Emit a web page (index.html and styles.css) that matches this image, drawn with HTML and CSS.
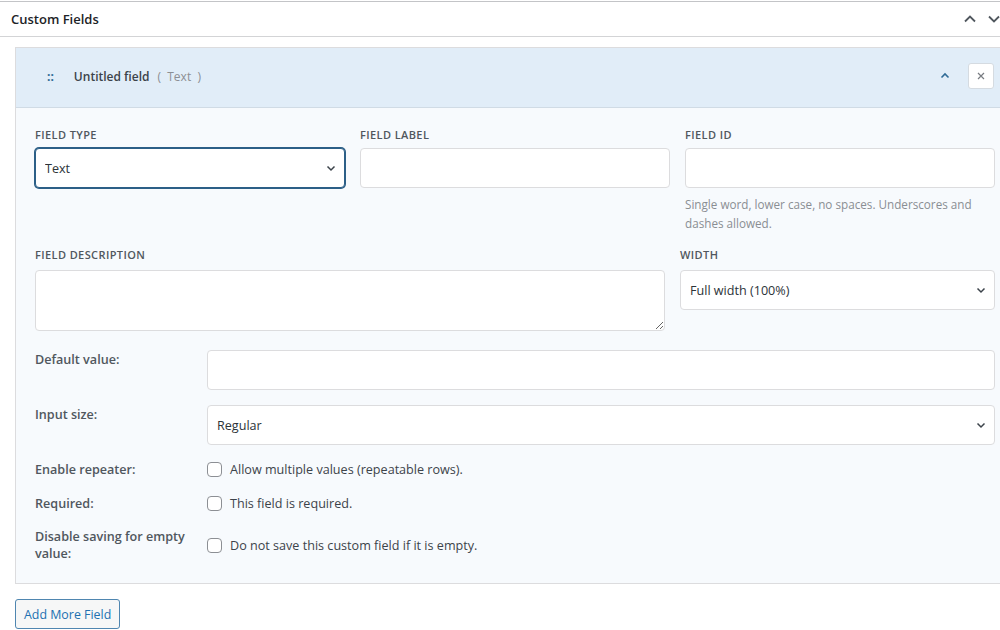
FILE: index.html
```html
<!DOCTYPE html>
<html lang="en">
<head>
<meta charset="UTF-8" />
<meta name="viewport" content="width=device-width, initial-scale=1" />
<title>Custom Fields</title>
<link rel="stylesheet" href="styles.css">
</head>
<body>

<div class="postbox">
  <!-- Box header -->
  <div class="postbox-header">
    <h2>Custom Fields</h2>
    <div class="order-btns">
      <button class="order-btn" aria-label="Move up">
        <svg width="14" height="14" viewBox="0 0 14 14"><path d="M2 9.5 7 4.5l5 5" fill="none" stroke="#50575e" stroke-width="1.8"/></svg>
      </button>
      <button class="order-btn" aria-label="Move down">
        <svg width="14" height="14" viewBox="0 0 14 14"><path d="M2 4.5 7 9.5l5-5" fill="none" stroke="#50575e" stroke-width="1.8"/></svg>
      </button>
    </div>
  </div>

  <div class="inside">
    <!-- Field panel -->
    <div class="field-panel">
      <div class="field-head">
        <span class="drag">::</span>
        <span class="field-name">Untitled field</span>
        <span class="field-type">(&nbsp;&nbsp;Text&nbsp;&nbsp;)</span>
        <span class="head-spacer"></span>
        <button class="toggle-btn" aria-label="Collapse">
          <svg width="12" height="12" viewBox="0 0 12 12"><path d="M2.5 7.5 6 4l3.5 3.5" fill="none" stroke="#2f6b96" stroke-width="1.6"/></svg>
        </button>
        <button class="remove-btn" aria-label="Remove">
          <svg width="10" height="10" viewBox="0 0 10 10"><path d="M2 2l6 6M8 2 2 8" fill="none" stroke="#787c82" stroke-width="1.2"/></svg>
        </button>
      </div>

      <div class="field-body">
        <div class="grid-3">
          <div class="col">
            <label class="cap-label" for="ftype">Field Type</label>
            <div class="select-wrap">
              <select id="ftype" class="control focused"><option>Text</option></select>
              <svg class="chev" width="12" height="12" viewBox="0 0 12 12"><path d="M2.5 4.5 6 8l3.5-3.5" fill="none" stroke="#3c434a" stroke-width="1.5"/></svg>
            </div>
          </div>
          <div class="col">
            <label class="cap-label" for="flabel">Field Label</label>
            <input id="flabel" class="control" type="text" />
          </div>
          <div class="col">
            <label class="cap-label" for="fid">Field ID</label>
            <input id="fid" class="control" type="text" />
            <p class="help">Single word, lower case, no spaces. Underscores and dashes allowed.</p>
          </div>
        </div>

        <div class="grid-2">
          <div class="col">
            <label class="cap-label" for="fdesc">Field Description</label>
            <textarea id="fdesc" class="control area"></textarea>
          </div>
          <div class="col">
            <label class="cap-label" for="fwidth">Width</label>
            <div class="select-wrap">
              <select id="fwidth" class="control"><option>Full width (100%)</option></select>
              <svg class="chev" width="12" height="12" viewBox="0 0 12 12"><path d="M2.5 4.5 6 8l3.5-3.5" fill="none" stroke="#3c434a" stroke-width="1.5"/></svg>
            </div>
          </div>
        </div>

        <div class="opts">
          <label class="opt-label top" for="fdefault">Default value:</label>
          <input id="fdefault" class="control" type="text" />

          <label class="opt-label top" for="fsize">Input size:</label>
          <div class="select-wrap">
            <select id="fsize" class="control"><option>Regular</option></select>
            <svg class="chev" width="12" height="12" viewBox="0 0 12 12"><path d="M2.5 4.5 6 8l3.5-3.5" fill="none" stroke="#3c434a" stroke-width="1.5"/></svg>
          </div>

          <span class="opt-label">Enable repeater:</span>
          <label class="check"><input type="checkbox" /> Allow multiple values (repeatable rows).</label>

          <span class="opt-label">Required:</span>
          <label class="check"><input type="checkbox" /> This field is required.</label>

          <span class="opt-label">Disable saving for empty value:</span>
          <label class="check"><input type="checkbox" /> Do not save this custom field if it is empty.</label>
        </div>
      </div>
    </div>

    <button class="add-btn">Add More Field</button>
  </div>
</div>

</body>
</html>
```

FILE: styles.css
```css
html, body {
  margin: 0;
  overflow: hidden;
  background: #fff;
}

body {
  font-family: "Open Sans", "Noto Sans", sans-serif;
  font-size: 12.6px;
  color: #3c434a;
}

/* Outer meta box */
.postbox {
  width: 1030px;
  border-top: 1px solid #c3c4c7;
  margin-top: 1px;
  background: #fff;
}

.postbox-header {
  display: flex;
  align-items: center;
  height: 34px;
  border-bottom: 1px solid #d3d4d6;
}

.postbox-header h2 {
  margin: 0;
  padding-left: 11px;
  font-size: 13px;
  font-weight: 600;
  color: #1d2327;
  flex: 1;
}

.order-btns {
  display: flex;
  gap: 2px;
  margin-right: 25px;
}

.order-btn {
  width: 22px;
  height: 24px;
  padding: 0;
  border: none;
  background: none;
  display: flex;
  align-items: center;
  justify-content: center;
}

.inside {
  padding: 10px 15px 2px;
}

/* Field panel */
.field-panel {
  border: 1px solid #dcdcde;
  background: #f7fafd;
}

.field-head {
  display: flex;
  align-items: center;
  height: 56px;
  padding: 0 0 3px 31px;
  background: #e1edf8;
  border-bottom: 1px solid #d0dbe5;
}

.drag {
  color: #2f6b96;
  font-weight: 700;
  font-size: 12px;
  margin-right: 20px;
}

.field-name {
  font-weight: 600;
  font-size: 12px;
  color: #3c434a;
  margin-right: 8px;
}

.field-type {
  color: #8c8f94;
  font-size: 12px;
}

.head-spacer {
  flex: 1;
}

.toggle-btn {
  width: 24px;
  height: 24px;
  padding: 0;
  border: none;
  background: none;
  display: flex;
  align-items: center;
  justify-content: center;
  margin-right: 11px;
}

.remove-btn {
  width: 26px;
  height: 26px;
  padding: 0;
  border: 1px solid #d5dbe1;
  border-radius: 3px;
  background: #fff;
  display: flex;
  align-items: center;
  justify-content: center;
  margin-right: 20px;
}

.field-body {
  padding: 19px 19px 21px;
}

.grid-3 {
  display: grid;
  grid-template-columns: 1fr 1fr 1fr;
  gap: 15px;
}

.grid-2 {
  display: grid;
  grid-template-columns: 2fr 1fr;
  gap: 15px;
  margin-top: 14px;
}

.col {
  display: flex;
  flex-direction: column;
}

.cap-label {
  font-size: 11px;
  font-weight: 600;
  letter-spacing: 0.4px;
  text-transform: uppercase;
  color: #50575e;
  line-height: 16px;
  margin-bottom: 5px;
}

.grid-2 .cap-label {
  margin-bottom: 7px;
}

.control {
  box-sizing: border-box;
  width: 100%;
  height: 40px;
  margin: 0;
  padding: 0 9px;
  font-family: inherit;
  font-size: 12.6px;
  color: #2c3338;
  background: #fff;
  border: 1px solid #dcdcde;
  border-radius: 4px;
  outline: none;
}

select.control {
  appearance: none;
  -webkit-appearance: none;
}

.control.focused {
  border: 1px solid #2c5f87;
  box-shadow: 0 0 0 1px #2c5f87;
}

.area {
  height: 61px;
  padding: 6px 9px;
  resize: vertical;
}

.select-wrap {
  position: relative;
}

.chev {
  position: absolute;
  right: 8px;
  top: 14px;
  pointer-events: none;
}

.help {
  margin: 7px 0 0;
  line-height: 19px;
  color: #8a8e93;
  font-size: 11.7px;
}

/* Options table */
.opts {
  display: grid;
  grid-template-columns: 172px 1fr;
  row-gap: 15px;
  margin-top: 19px;
  align-items: center;
}

.opt-label {
  color: #50575e;
  font-weight: 600;
  line-height: 17px;
  padding-right: 12px;
}

.opt-label.top {
  align-self: start;
  line-height: 20px;
}

.check {
  display: flex;
  align-items: center;
  gap: 8px;
  line-height: 19px;
  color: #3c434a;
}

.check input {
  appearance: none;
  -webkit-appearance: none;
  width: 15px;
  height: 15px;
  margin: 0;
  border: 1px solid #8c8f94;
  border-radius: 4px;
  background: #fff;
}

.add-btn {
  margin-top: 15px;
  height: 30px;
  padding: 0 8px;
  font-family: inherit;
  font-size: 12.4px;
  color: #2271b1;
  background: #f6f7f7;
  border: 1px solid #4f86b0;
  border-radius: 3px;
}
```
